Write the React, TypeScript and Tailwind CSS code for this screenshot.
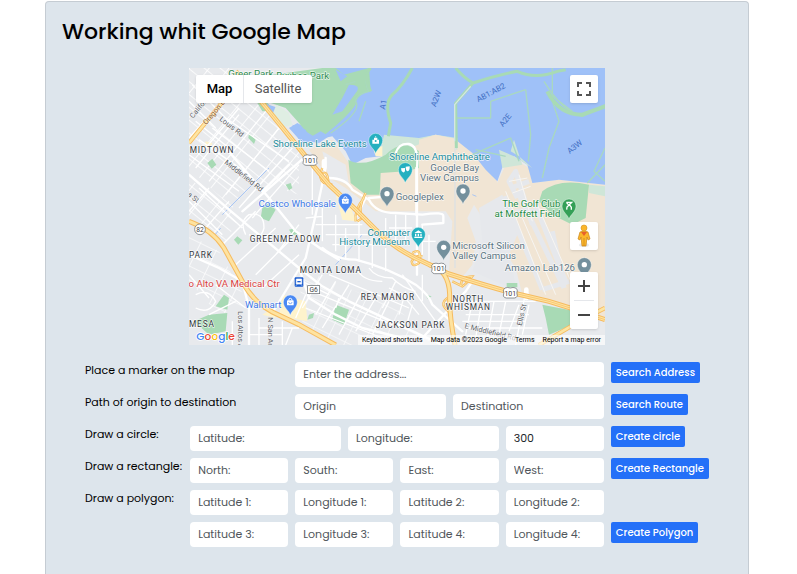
import React from 'react';

type PinKind = 'teal' | 'blue' | 'slate' | 'green';

const pinColors: Record<PinKind, string> = {
  teal: '#24b0c0',
  blue: '#4a89f3',
  slate: '#74909d',
  green: '#34a057',
};

function Pin({ x, y, kind, children }: { x: number; y: number; kind: PinKind; children?: React.ReactNode }) {
  return (
    <g transform={`translate(${x} ${y})`}>
      <path
        d="M0 2C-3-12-21-20-21-38A21 21 0 0 1 21-38C21-20 3-12 0 2Z"
        fill={pinColors[kind]}
        stroke="#fff"
        strokeOpacity="0.6"
        strokeWidth="2"
      />
      {children ?? <circle cx="0" cy="-38" r="8" fill="#fff" />}
    </g>
  );
}

const Bag = () => (
  <g>
    <rect x="-10" y="-43" width="20" height="15" rx="2" fill="#fff" />
    <path d="M-5-43a5 6 0 0 1 10 0" fill="none" stroke="#fff" strokeWidth="3" />
    <path d="M-5-38a5 5 0 0 0 10 0" fill="none" stroke="#4a89f3" strokeWidth="2" />
  </g>
);

function Shield({ x, y, label }: { x: number; y: number; label: string }) {
  return (
    <g transform={`translate(${x} ${y})`}>
      <path
        d="M-16-15Q-8-18 0-15Q8-18 16-15L21-9Q18 0 21 9Q18 15 12 15H-12Q-18 15-21 9Q-18 0-21-9Z"
        fill="#fff"
        stroke="#5f6368"
        strokeWidth="2"
      />
      <text y="8" textAnchor="middle" fill="#3c4043" className="text-[21px]">
        {label}
      </text>
    </g>
  );
}

interface PlaceProps {
  x: number;
  y: number;
  fill: string;
  anchor?: 'start' | 'middle' | 'end';
  lines: string[];
}

function Place({ x, y, fill, anchor = 'start', lines }: PlaceProps) {
  return (
    <text x={x} y={y} fill={fill} textAnchor={anchor} stroke="#fff" strokeWidth="4" strokeOpacity="0.75" strokeLinejoin="round" className="text-[29px] [paint-order:stroke]">
      {lines.map((line, i) => (
        <tspan key={line} x={x} dy={i === 0 ? 0 : 29}>
          {line}
        </tspan>
      ))}
    </text>
  );
}

function Area({ x, y, lines, anchor = 'start' }: Omit<PlaceProps, 'fill'>) {
  return (
    <text x={x} y={y} fill="#33373a" textAnchor={anchor} stroke="#fff" strokeWidth="4" strokeOpacity="0.75" strokeLinejoin="round" className="text-[25px] tracking-widest [paint-order:stroke]">
      {lines.map((line, i) => (
        <tspan key={line} x={x} dy={i === 0 ? 0 : 26}>
          {line}
        </tspan>
      ))}
    </text>
  );
}

function Street({ x, y, angle, label, fill = '#5f6368' }: { x: number; y: number; angle: number; label: string; fill?: string }) {
  return (
    <text transform={`translate(${x} ${y}) rotate(${angle})`} fill={fill} stroke="#fff" strokeWidth="3" strokeOpacity="0.6" className="text-[22px] [paint-order:stroke]">
      {label}
    </text>
  );
}

const highways = [
  'M140 10L220 105L350 265L420 350L500 425L560 485Q620 545 700 580L780 618Q880 650 960 672L1080 700L1150 722L1248 755',
  'M0 460Q70 485 105 540L160 640Q190 700 250 732L330 770L440 831',
  'M720 590Q780 605 782 680Q780 740 798 831',
];

const ramps = [
  'M400 300Q385 330 405 345L430 350M392 322Q415 300 418 340',
  'M500 460Q495 425 525 390M530 375Q505 420 520 450L505 460',
  'M670 555Q700 535 690 585Q670 600 668 580Q680 560 700 565',
  'M815 655Q815 625 850 625Q830 650 820 655L790 640',
  'M775 690Q755 705 768 720L782 735',
];

const arterials = [
  'M0 320L120 425L330 600L400 655L480 700L640 775L760 831',
  'M420 330Q470 330 490 365L540 395Q560 435 620 435L700 440Q765 430 763 445V465L700 470',
  'M682 440V300M620 255Q630 225 660 228Q690 235 684 300V620',
  'M540 390L600 385M500 450L530 390',
  'M400 540Q440 575 500 575Q600 600 680 650Q720 680 730 710L820 790',
  'M250 735L350 570L380 440L410 300V270',
  'M700 810L830 670L850 640',
  'M110 240L240 390L320 490L400 545L450 575',
  'M220 370L300 290M160 430L350 265',
  'M0 560L90 600L160 640M160 640L180 720V831',
  'M330 600L360 690L440 740L520 780L640 810',
];

const residential = [
  'M30 215L180 320M70 180L240 310M110 150L300 280M0 260L150 370M20 300L60 250L150 140M60 340L230 130M110 380L270 180M150 420L310 240M20 160L120 240M190 450L330 290',
  'M0 400L100 500M30 360L160 480M0 430L60 360M50 480L120 400M100 530L200 430M140 590L260 480M170 500Q150 460 180 440Q225 430 225 480Q215 520 180 500M260 560L330 470M200 620L300 520M220 660L330 560',
  'M370 300V440M400 420V520M440 440V550M380 470H520M410 500H560M470 480V570M510 450V580M430 530H590M550 510V600M590 540V610M350 450L400 445',
  'M620 440V520M650 440V520M600 480H670M590 450V500M700 470V560M720 500V580M700 520H740',
  'M400 620L340 720M440 640L380 740M480 650L400 780M520 670L450 800M560 690L500 790M600 700L550 800M370 670L610 770M350 720L580 810M420 620L660 720M620 640L580 720M650 670L630 740M670 710L650 780',
  'M500 600Q520 640 580 640M540 600Q560 630 610 630Q640 660 680 670M600 660L640 680L690 740M700 620V700M640 620L740 760',
  'M820 700H1040M830 740H1020M840 780H1060M850 700L830 800M880 690L860 810M915 700L895 810M950 700L930 800M990 710L960 790M1020 710L1000 800M820 760H1010M1010 670L980 831',
  'M0 620L60 690M20 680Q60 660 80 700Q60 740 20 720M60 740L140 700M80 650L170 720M130 760V831M210 750V831M280 760V831M310 780L290 831M210 780H330M180 800H280M350 680L320 750M340 640L420 680M450 690L440 720',
  'M10 50L130 170M0 100L80 180M90 110L0 210M150 120L50 240',
];

const levees = [
  'M545 0Q520 40 540 70Q500 80 500 100Q520 130 425 195',
  'M800 150H905V100L1010 65',
  'M1010 65L1025 200L1018 280',
  'M850 260L965 210L990 280M860 245L950 265',
  'M1090 0V100L1110 160L1080 240L1060 330',
  'M1085 80L1150 130M1065 40Q1120 130 1180 145L1248 110',
  'M1248 240L1215 310L1248 340M1195 345L1248 290',
  'M530 100L510 160M470 50L500 40',
];

function Pegman() {
  return (
    <svg viewBox="0 0 16 24" className="h-6 w-4" aria-hidden="true">
      <ellipse cx="8" cy="21" rx="5" ry="2" fill="#e8eaed" />
      <path d="M4 8Q8 6 12 8L14 15L12 16L11 13L10 22H6L5 13L4 16L2 15Z" fill="#fbb62b" stroke="#c98519" strokeWidth="0.7" />
      <path d="M5 8L8 12L11 8Z" fill="#e8612c" />
      <circle cx="8" cy="4" r="3" fill="#fbb62b" stroke="#d49022" strokeWidth="0.6" />
      <path d="M8 14V22" stroke="#c98519" strokeWidth="0.7" />
    </svg>
  );
}

function MapDrawing() {
  return (
    <svg viewBox="0 0 1248 831" className="block h-full w-full font-[Roboto,sans-serif]" role="img" aria-label="Map of Mountain View">
      <defs>
        <pattern id="blocks" width="46" height="30" patternUnits="userSpaceOnUse" patternTransform="rotate(39)">
          <path d="M0 0H46M0 0V30" stroke="#fff" strokeWidth="5" fill="none" />
        </pattern>
        <pattern id="blocksSouth" width="52" height="38" patternUnits="userSpaceOnUse" patternTransform="rotate(26)">
          <path d="M0 0H52M0 0V38" stroke="#fff" strokeWidth="5" fill="none" />
        </pattern>
      </defs>
      <rect width="1248" height="831" fill="#e8eaed" />
      <path d="M0 0H120L330 250L330 380L200 340L130 420L0 300Z" fill="url(#blocks)" />
      <path d="M0 330L150 450L110 520L0 455Z" fill="url(#blocks)" />
      <path d="M330 600L620 720L720 800V831H440L340 765Z" fill="url(#blocksSouth)" opacity="0.7" />
      <path d="M0 500L90 550L180 710L90 740L0 640Z" fill="url(#blocksSouth)" opacity="0.8" />

      {/* Sandy ground around the bay shore */}
      <path d="M360 245L430 215L490 300L590 310L700 215L740 200L800 205L850 255L910 280L925 345L950 290L980 275L1020 300L1030 345L1110 335L1248 350V760L1090 700L1000 680L980 600L900 480L855 410L835 450L860 520L850 590L810 640L780 610L790 460L770 430L560 430L470 360L420 330Z" fill="#f1e5d4" />
      <path d="M870 420L940 380L985 500L960 560L985 670L850 610L880 520Z" fill="#e6e8ec" />
      <path d="M400 250L470 290L480 350L420 330Z" fill="#e8eaed" />

      {/* Bay water */}
      <path d="M430 0H1248V350L1110 335L1030 345L1015 290L975 265L945 285L925 340L890 305L850 255L800 215L740 200L690 213L600 205L575 265L530 270L490 290L470 250L430 205L340 225L300 180L325 165L370 190L430 150L455 110L480 80L440 40Z" fill="#9fc1f8" />

      {/* Parks */}
      <path d="M190 80L240 20H250L400 0H440L465 20L540 0L545 70Q500 80 500 110Q480 140 420 190L390 215L350 190L330 165L290 120L230 100L260 130L220 130Z" fill="#a8dab5" />
      <path d="M440 5L475 25L455 40ZM480 50Q520 50 500 75L460 130L430 140L460 90Z" fill="#9fc1f8" />
      <path d="M232 108L262 118L268 142L250 136Z" fill="#9fc1f8" />
      <path d="M262 110L300 135L310 170L285 178L250 140Z" fill="#dfeee3" />
      <path d="M310 170L350 185L360 210L395 190L420 205L390 225L330 215Z" fill="#9fc1f8" />
      <path d="M585 200L690 210L740 200L805 210V245L700 225L600 265L570 265Z" fill="#cfe6d8" />
      <path d="M690 215L740 200L800 212V300H690Z" fill="#f1e5d4" />
      <path d="M478 275Q520 300 590 260Q640 210 690 250V300L650 310L575 315L572 380H530L485 345Z" fill="#a8dab5" />
      <path d="M930 245L975 265L1030 300L990 265L965 250L975 215L1000 290L940 300Z" fill="#cfe6d8" />
      <path d="M1060 370Q1110 330 1200 350L1190 450L1150 470L1090 440L1050 400Z" fill="#a8dab5" />
      <path d="M1200 350L1248 355V385L1200 375Z" fill="#cfe6d8" />
      <path d="M240 405L260 425L240 460L215 450L220 420ZM55 285L70 272L82 290L68 302ZM135 515L145 505L160 517L148 530ZM180 195L200 215L195 228L178 210ZM290 350L305 345L310 360L300 367Z" fill="#a8dab5" />
      <path d="M15 760L60 740L115 735L110 790L60 800ZM80 715L105 680L120 690L115 725ZM440 710L480 725L465 770L430 755ZM1060 710L1160 730L1150 770L1080 800L1070 750ZM360 740L375 735L372 750L355 755ZM710 680L728 685L715 692ZM953 645H985V658H953ZM300 485L320 480L325 500H310Z" fill="#a8dab5" />
      <path d="M440 380L480 400L500 460L460 455ZM50 220L70 225L65 240H45ZM280 680L350 700L355 760L270 745ZM550 235H580V265H560ZM220 740L250 720L260 750Z" fill="#fef3cc" />

      <g fill="none" stroke="#a9d8c0" strokeWidth="4" strokeLinejoin="round">
        {levees.map((d) => (
          <path key={d} d={d} />
        ))}
      </g>
      <path d="M670 0Q640 55 610 80Q585 105 605 165L598 205M545 0Q520 20 545 70M852 45L800 105L802 240M800 0Q825 30 852 45M852 45Q930 20 985 10Q1040 35 1105 10L1130 5" fill="none" stroke="#a8dab5" strokeWidth="9" />
      <path d="M845 55L797 110V220" fill="none" stroke="#d5e6e3" strokeWidth="4" />
      <path d="M1075 70Q1110 140 1180 140L1248 115" fill="none" stroke="#a8dab5" strokeWidth="12" />
      <path d="M850 380L862 385M100 440L240 300M70 510L95 480M440 590L520 500" stroke="#a9c6f5" strokeWidth="3" fill="none" />
      <path d="M798 240V600" stroke="#d5dfe8" strokeWidth="3" fill="none" />

      {/* Moffett airfield */}
      <g fill="none" stroke="#e6e8ec" strokeWidth="15" strokeLinejoin="round">
        <path d="M945 385L1060 665M985 370L1125 660M1035 400L1130 640M1030 470L980 310L960 340L985 390M980 430H1040M1060 665L1140 640M1090 490L1125 660M965 360L1020 340" />
      </g>
      <path d="M950 370L1070 680M1000 450L1100 680M1045 410L1150 650M990 320L1030 460M960 340L1015 330M970 375L1025 355" fill="none" stroke="#f7f5f2" strokeWidth="3" />

      <g fill="none" stroke="#fff" strokeWidth="4" strokeLinejoin="round">
        {residential.map((d) => (
          <path key={d} d={d} />
        ))}
      </g>
      <g fill="none" stroke="#fff" strokeWidth="7" strokeLinejoin="round" strokeLinecap="round">
        {arterials.map((d) => (
          <path key={d} d={d} />
        ))}
      </g>
      <path d="M405 280V300M1012 665V690" stroke="#fff" strokeWidth="14" strokeLinecap="round" />

      <g fill="none" stroke="#f6bb5f" strokeWidth="7">
        {ramps.map((d) => (
          <path key={d} d={d} />
        ))}
        <path d="M0 225L110 90M1050 831L1180 755L1248 720" strokeWidth="13" />
      </g>
      <g fill="none" stroke="#fde5a3" strokeWidth="3">
        {ramps.map((d) => (
          <path key={d} d={d} />
        ))}
        <path d="M0 225L110 90M1050 831L1180 755L1248 720" strokeWidth="8" />
      </g>
      <g fill="none" stroke="#f6bb5f" strokeWidth="15">
        {highways.map((d) => (
          <path key={d} d={d} />
        ))}
      </g>
      <g fill="none" stroke="#fee3a0" strokeWidth="9">
        {highways.map((d) => (
          <path key={d} d={d} />
        ))}
      </g>
      <path d={highways[0]} fill="none" stroke="#f6bb5f" strokeWidth="2" />

      <Street x={12} y={152} angle={-50} label="Califor" />
      <Street x={52} y={172} angle={-50} label="Oregon Expy" fill="#8a5a2b" />
      <Street x={90} y={156} angle={38} label="Louis Rd" />
      <Street x={105} y={286} angle={38} label="Middlefield Rd" />
      <Street x={-6} y={382} angle={38} label="a St" />
      <Street x={147} y={730} angle={90} label="Los Altos A" />
      <Street x={238} y={748} angle={90} label="N San An" />
      <Street x={826} y={780} angle={14} label="E Middlefield Rd" />
      <Street x={998} y={774} angle={-77} label="Ellis St" />
      <g fill="#3f6fc4" className="text-[24px]">
        <text transform="translate(588 125) rotate(-80)">A1</text>
        <text transform="translate(740 118) rotate(-70)">A2W</text>
        <text transform="translate(868 103) rotate(-28)">AB1:AB2</text>
        <text transform="translate(942 178) rotate(-52)">A2E</text>
        <text transform="translate(1142 258) rotate(-38)">A3W</text>
      </g>

      <Area x={2} y={256} lines={['MIDTOWN']} />
      <Area x={182} y={522} lines={['GREENMEADOW']} />
      <Area x={0} y={570} lines={['PARK']} />
      <Area x={332} y={616} lines={['MONTA LOMA']} />
      <Area x={515} y={697} lines={['REX MANOR']} />
      <Area x={560} y={780} lines={['JACKSON PARK']} />
      <Area x={838} y={701} anchor="middle" lines={['NORTH', 'WHISMAN']} />
      <Area x={0} y={778} lines={['MESA']} />

      <Place x={118} y={26} fill="#2d8c50" lines={['Greer Park']} />
      <Place x={262} y={34} fill="#2d8c50" lines={['Byxbee Park']} />
      <Place x={533} y={237} anchor="end" fill="#1a8c9c" lines={['Shoreline Lake Events']} />
      <Place x={601} y={275} fill="#1a8c9c" lines={['Shoreline Amphitheatre']} />
      <Place x={870} y={310} anchor="end" fill="#5b7482" lines={['Google Bay', 'View Campus']} />
      <Place x={620} y={397} fill="#5b7482" lines={['Googleplex']} />
      <Place x={441} y={416} anchor="end" fill="#3c78e6" lines={['Costco Wholesale']} />
      <Place x={1114} y={418} anchor="end" fill="#1f8b45" lines={['The Golf Club', 'at Moffett Field']} />
      <Place x={663} y={503} anchor="end" fill="#1a8c9c" lines={['Computer', 'History Museum']} />
      <Place x={790} y={543} fill="#5b7482" lines={['Microsoft Silicon', 'Valley Campus']} />
      <Place x={1158} y={609} anchor="end" fill="#5b7482" lines={['Amazon Lab126']} />
      <Place x={272} y={657} anchor="end" fill="#d93f3f" lines={['o Alto VA Medical Ctr']} />
      <Place x={277} y={719} anchor="end" fill="#3c78e6" lines={['Walmart']} />

      <Shield x={363} y={277} label="101" />
      <Shield x={749} y={602} label="101" />
      <Shield x={964} y={675} label="101" />
      <circle cx="33" cy="484" r="16" fill="#fff" stroke="#5f6368" strokeWidth="2" />
      <text x="33" y="491" textAnchor="middle" fill="#3c4043" className="text-[20px]">82</text>
      <rect x="356" y="653" width="36" height="24" fill="#fff" stroke="#5f6368" strokeWidth="2" />
      <text x="374" y="672" textAnchor="middle" fill="#3c4043" className="text-[20px]">G6</text>
      <rect x="317" y="628" width="26" height="28" rx="3" fill="#1a5ccf" />
      <path d="M322 633H338V648H322ZM324 649L321 653M336 649L339 653" fill="#fff" stroke="#fff" strokeWidth="2" />
      <path d="M325 641H335" stroke="#1a5ccf" strokeWidth="4" />

      <Pin x={560} y={255} kind="teal">
        <path d="M-10-28V-40H-5V-46H5V-40H10V-28Z" fill="#fff" />
        <path d="M0-38V-32M0-46V-51" stroke="#fff" strokeWidth="2" />
        <circle cx="0" cy="-36" r="3" fill="#24b0c0" />
      </Pin>
      <Pin x={649} y={343} kind="teal">
        <path d="M-13-42L-1-43V-35Q-2-29-7-30Q-13-32-13-42ZM1-47L13-48Q14-35 7-33Q1-34 1-47Z" fill="#fff" />
      </Pin>
      <Pin x={594} y={415} kind="slate" />
      <Pin x={822} y={407} kind="slate" />
      <Pin x={469} y={435} kind="blue"><Bag /></Pin>
      <Pin x={1140} y={452} kind="green">
        <path d="M-8-49H8L1-42L7-34V-27M1-42L-6-35L-7-27M-8-49L-2-42" fill="none" stroke="#fff" strokeWidth="4" />
      </Pin>
      <Pin x={688} y={537} kind="teal">
        <path d="M-12-42L0-50L12-42ZM-10-40H-6V-32H-10ZM-2-40H2V-32H-2ZM6-40H10V-32H6ZM-12-31H12V-27H-12Z" fill="#fff" />
      </Pin>
      <Pin x={764} y={576} kind="slate" />
      <Pin x={1186} y={628} kind="slate" />
      <Pin x={304} y={740} kind="blue"><Bag /></Pin>

      <text x="22" y="816" stroke="#fff" strokeWidth="5" strokeLinejoin="round" className="font-[Poppins,Lato,sans-serif] text-[32px] font-medium [paint-order:stroke]">
        <tspan fill="#4285f4">G</tspan>
        <tspan fill="#ea4335">o</tspan>
        <tspan fill="#fbbc04">o</tspan>
        <tspan fill="#4285f4">g</tspan>
        <tspan fill="#34a853">l</tspan>
        <tspan fill="#ea4335">e</tspan>
      </text>
    </svg>
  );
}

function MapPanel() {
  return (
    <section aria-label="Map" className="relative mx-auto mt-[18px] aspect-[416/277] w-full max-w-[416px] overflow-hidden font-[Roboto,sans-serif]">
      <MapDrawing />
      <div className="absolute left-[7px] top-[7px] flex h-7 rounded-xs bg-white text-[13px] shadow">
        <button type="button" className="w-12 border-r border-gray-200 font-medium text-black">Map</button>
        <button type="button" className="w-[68px] text-[#565656]">Satellite</button>
      </div>
      <button type="button" aria-label="Toggle fullscreen view" className="absolute right-[7px] top-[7px] grid size-7 place-items-center rounded-xs bg-white shadow">
        <svg viewBox="0 0 14 14" className="size-[14px]" fill="none" stroke="#555" strokeWidth="2" aria-hidden="true">
          <path d="M1 5V1H5M9 1H13V5M13 9V13H9M5 13H1V9" />
        </svg>
      </button>
      <button type="button" aria-label="Street View" className="absolute bottom-[95px] right-[7px] grid size-7 place-items-center rounded-xs bg-white shadow">
        <Pegman />
      </button>
      <div className="absolute bottom-4 right-[7px] flex w-7 flex-col items-center rounded-xs bg-white shadow">
        <button type="button" aria-label="Zoom in" className="grid h-7 w-full place-items-center">
          <svg viewBox="0 0 12 12" className="size-3" stroke="#444" strokeWidth="2" aria-hidden="true"><path d="M0 6H12M6 0V12" /></svg>
        </button>
        <span className="h-px w-5 bg-gray-200" />
        <button type="button" aria-label="Zoom out" className="grid h-7 w-full place-items-center">
          <svg viewBox="0 0 12 12" className="size-3" stroke="#444" strokeWidth="2" aria-hidden="true"><path d="M0 6H12" /></svg>
        </button>
      </div>
      <div className="absolute bottom-0 right-0 flex h-[10px] items-center gap-2 whitespace-nowrap bg-white/60 px-1 text-[7px] leading-[10px] text-black">
        <button type="button">Keyboard shortcuts</button>
        <span>Map data ©2023 Google</span>
        <a href="#terms">Terms</a>
        <a href="#report">Report a map error</a>
      </div>
    </section>
  );
}

function Field({ id, label, className, value }: { id: string; label: string; className: string; value?: string }) {
  return (
    <input
      id={id}
      type="text"
      aria-label={label}
      placeholder={label}
      defaultValue={value}
      className={`h-[25px] w-full min-w-0 rounded-sm bg-white px-2 text-[11px] text-[#212529] outline-none placeholder:text-[#50565b] ${className}`}
    />
  );
}

function RowLabel({ htmlFor, className, children }: { htmlFor: string; className: string; children: string }) {
  return (
    <label htmlFor={htmlFor} className={`whitespace-nowrap text-[11px] leading-4 text-black ${className}`}>
      {children}
    </label>
  );
}

function Action({ children }: { children: string }) {
  return (
    <div className="col-span-2">
      <button type="button" className="block h-[21px] whitespace-nowrap rounded-xs bg-[#2470f8] px-[5px] text-[10px] font-medium leading-[21px] text-white">
        {children}
      </button>
    </div>
  );
}

export default function App() {
  return (
    <div className="flex min-h-screen bg-white pl-[45px] pr-12 pt-px font-[Poppins,Inter,sans-serif] text-[#212529]">
      <main className="min-w-0 flex-1 rounded-t border border-b-0 border-[#c5ccd3] bg-[#dde5ec] pt-3">
        <h1 className="px-4 text-[22px] font-medium leading-9 text-black">Working whit Google Map</h1>
        <MapPanel />
        <form className="mx-[39px] mt-[17px] grid grid-cols-12 items-start gap-[7px] pb-6">
          <RowLabel htmlFor="address" className="col-span-4">Place a marker on the map</RowLabel>
          <Field id="address" label="Enter the address..." className="col-span-6" />
          <Action>Search Address</Action>

          <RowLabel htmlFor="origin" className="col-span-4">Path of origin to destination</RowLabel>
          <Field id="origin" label="Origin" className="col-span-3" />
          <Field id="destination" label="Destination" className="col-span-3" />
          <Action>Search Route</Action>

          <RowLabel htmlFor="circle-lat" className="col-span-2">Draw a circle:</RowLabel>
          <Field id="circle-lat" label="Latitude:" className="col-span-3" />
          <Field id="circle-lng" label="Longitude:" className="col-span-3" />
          <Field id="circle-radius" label="Radius:" value="300" className="col-span-2" />
          <Action>Create circle</Action>

          <RowLabel htmlFor="north" className="col-span-2">Draw a rectangle:</RowLabel>
          <Field id="north" label="North:" className="col-span-2" />
          <Field id="south" label="South:" className="col-span-2" />
          <Field id="east" label="East:" className="col-span-2" />
          <Field id="west" label="West:" className="col-span-2" />
          <Action>Create Rectangle</Action>

          <RowLabel htmlFor="lat-1" className="col-span-2">Draw a polygon:</RowLabel>
          <Field id="lat-1" label="Latitude 1:" className="col-span-2" />
          <Field id="lng-1" label="Longitude 1:" className="col-span-2" />
          <Field id="lat-2" label="Latitude 2:" className="col-span-2" />
          <Field id="lng-2" label="Longitude 2:" className="col-span-2" />

          <Field id="lat-3" label="Latitude 3:" className="col-span-2 col-start-3" />
          <Field id="lng-3" label="Longitude 3:" className="col-span-2" />
          <Field id="lat-4" label="Latitude 4:" className="col-span-2" />
          <Field id="lng-4" label="Longitude 4:" className="col-span-2" />
          <Action>Create Polygon</Action>
        </form>
      </main>
    </div>
  );
}
